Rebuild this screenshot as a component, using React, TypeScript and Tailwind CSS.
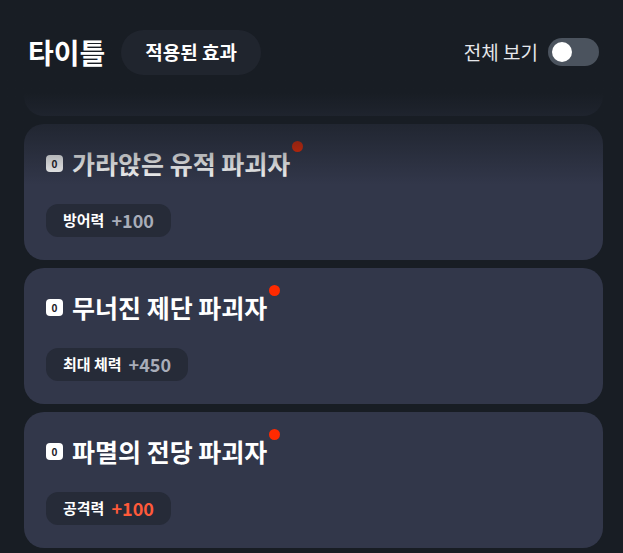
import type { ReactNode } from "react";

type Title = {
  id: number;
  name: string;
  stat: string;
  value: string;
  valueColor: string;
  hidden?: boolean;
};

const titles: Title[] = [
  { id: 0, name: "잊혀진 성소 파괴자", stat: "체력", value: "+200", valueColor: "text-[#a8adb9]", hidden: true },
  { id: 1, name: "가라앉은 유적 파괴자", stat: "방어력", value: "+100", valueColor: "text-[#a8adb9]" },
  { id: 2, name: "무너진 제단 파괴자", stat: "최대 체력", value: "+450", valueColor: "text-[#a8adb9]" },
  { id: 3, name: "파멸의 전당 파괴자", stat: "공격력", value: "+100", valueColor: "text-[#ff5a3a]" },
];

function Toggle() {
  return (
    <div className="flex h-[28px] w-[51px] items-center rounded-full bg-[#4b535e] px-[4px]">
      <div className="h-[20px] w-[20px] rounded-full bg-white" />
    </div>
  );
}

function Card({ t }: { t: Title }) {
  return (
    <div className="flex flex-col rounded-[20px] bg-[#32374a] px-[22px] pt-[23px] pb-[23px]">
      {/* scrolled-off card keeps its size, contents are under the header */}
      <div className={t.hidden ? "invisible" : ""}>
        <div className="flex h-[32px] items-center gap-[9px]">
          <span className="flex h-[17px] w-[17px] items-center justify-center rounded-[4px] bg-white text-[10px] font-bold text-[#1c2029]">
            0
          </span>
          <span className="relative text-[25px] leading-[32px] font-bold text-white">
            {t.name}
            <span className="absolute -top-[6px] -right-[13px] h-[11px] w-[11px] rounded-full bg-[#ff2a00]" />
          </span>
        </div>
        <div className="mt-[25px] flex">
          <div className="flex h-[33px] items-center gap-[7px] rounded-[12px] bg-[#262b38] px-[17px]">
            <span className="text-[15px] font-bold text-white">{t.stat}</span>
            <span className={`text-[18px] font-bold ${t.valueColor}`}>{t.value}</span>
          </div>
        </div>
      </div>
    </div>
  );
}

function Header({ children }: { children: ReactNode }) {
  return (
    <div className="pointer-events-none absolute inset-x-0 top-0 z-10 h-[185px] bg-linear-to-b from-[#181d24] from-[50%] to-[#181d2400]">
      <div className="pointer-events-auto flex h-[104px] items-center justify-between pl-[28px] pr-[24px]">
        {children}
      </div>
    </div>
  );
}

export default function App() {
  return (
    <div
      className="relative h-[553px] w-full overflow-hidden bg-[#181d24]"
      style={{ fontFamily: '"Noto Sans CJK KR", "Noto Sans", sans-serif' }}
    >
      <Header>
        <div className="flex items-center gap-[16px]">
          <h1 className="text-[28px] font-bold text-white">타이틀</h1>
          <button className="flex h-[45px] items-center rounded-full bg-[#20252e] px-[24px] text-[19px] font-semibold text-white">
            적용된 효과
          </button>
        </div>
        <div className="flex items-center gap-[10px]">
          <span className="text-[19px] text-[#e5e7eb]">전체 보기</span>
          <Toggle />
        </div>
      </Header>

      {/* list, scrolled so the first card sits under the header */}
      <div className="-mt-[20px] flex flex-col gap-[8px] pl-[24px] pr-[20px]">
        {titles.map((t) => (
          <Card key={t.id} t={t} />
        ))}
      </div>
    </div>
  );
}
